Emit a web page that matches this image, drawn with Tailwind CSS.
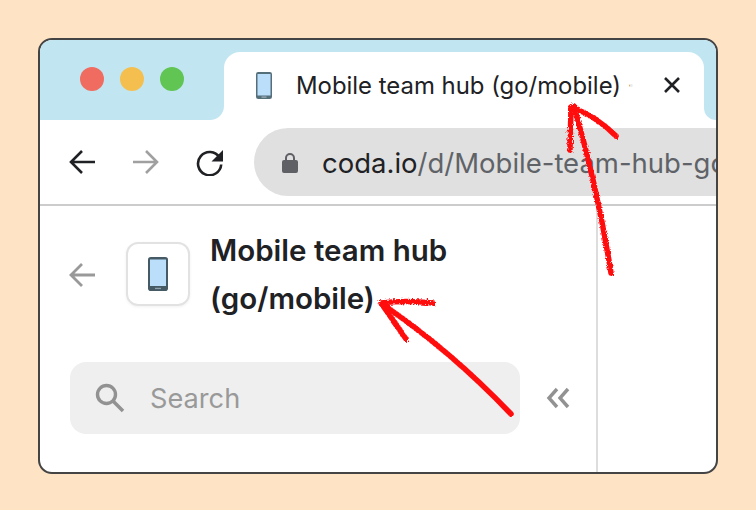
<!doctype html>
<html>
<head>
<meta charset="utf-8">
<script src="https://cdn.jsdelivr.net/npm/@tailwindcss/browser@4"></script>
</head>
<body class="m-0 w-[756px] h-[510px] overflow-hidden bg-[#ffe3c5] font-['Inter',sans-serif] [font-optical-sizing:none] relative">
<div class="pt-[38px] pl-[38px]">
  <div class="w-[680px] h-[436px] border-2 border-[#444444] rounded-[14px] overflow-hidden bg-white flex flex-col">
    <!-- tab strip -->
    <div class="flex h-[80px] shrink-0">
      <div class="w-[184px] bg-[#c1e6f1] rounded-br-[14px] pl-[40px] pt-[27px] flex gap-[16px] items-start">
        <span class="w-[24px] h-[24px] rounded-full bg-[#f16c60]"></span>
        <span class="w-[24px] h-[24px] rounded-full bg-[#f5bf4f]"></span>
        <span class="w-[24px] h-[24px] rounded-full bg-[#61c554]"></span>
      </div>
      <div class="w-[480px] bg-[#c1e6f1] pt-[12px]">
        <div class="h-[68px] bg-white rounded-t-[16px] flex items-center pl-[32px] relative">
          <svg class="w-[16px] h-[27px] shrink-0 -mt-[1px]" viewBox="0 0 16 27"><rect width="16" height="27" rx="2.2" fill="#546e7a"/><rect x="1.5" y="2" width="13" height="21.5" fill="#bbdefb"/><rect x="5.5" y="24.6" width="5" height="1" fill="#b0bec5"/></svg>
          <div class="ml-[24px] w-[347px] overflow-hidden whitespace-nowrap text-[23.9px] leading-[32px] text-[#202124] relative -mt-[1px]">Mobile team hub (go/mobile) · Coda
            <div class="absolute right-0 top-0 bottom-0 w-[13px] bg-gradient-to-r from-white/90 to-white"></div>
          </div>
          <svg class="absolute left-[440px] top-[25px] w-[16px] h-[16px]" viewBox="0 0 16 16"><path d="M1 1 L15 15 M15 1 L1 15" stroke="#202124" stroke-width="2.6" fill="none"/></svg>
        </div>
      </div>
      <div class="flex-1 bg-[#c1e6f1] rounded-bl-[14px]"></div>
    </div>
    <!-- toolbar -->
    <div class="h-[84px] shrink-0 flex border-b-0 pt-[8px] pl-[28px]">
      <div class="flex items-center h-[68px] gap-[36px] shrink-0">
        <svg class="w-[28px] h-[26px]" viewBox="0 0 28 26"><path d="M27 13 H3 M14 2 L3 13 L14 24" stroke="#202124" stroke-width="2.6" fill="none"/></svg>
        <svg class="w-[28px] h-[26px]" viewBox="0 0 28 26"><path d="M1 13 H25 M14 2 L25 13 L14 24" stroke="#a0a0a0" stroke-width="2.6" fill="none"/></svg>
        <svg class="w-[28px] h-[28px]" viewBox="0 0 28 28"><path d="M23.5 9.5 A11.6 11.6 0 1 0 25.2 16.5" stroke="#202124" stroke-width="2.6" fill="none"/><path d="M27 2 V13.5 H15.5 Z" fill="#202124"/></svg>
      </div>
      <div class="ml-[30px] flex-1 h-[68px] bg-[#e0e0e0] rounded-l-[34px] flex items-center pl-[28px] overflow-hidden">
        <svg class="w-[16px] h-[21px] shrink-0" viewBox="0 0 16 21"><path d="M4 9 V6 A4 4 0 0 1 12 6 V9" stroke="#5f6065" stroke-width="2" fill="none"/><rect y="8" width="16" height="13" rx="2" fill="#5f6065"/></svg>
        <div class="ml-[24px] mt-[1px] whitespace-nowrap text-[27.5px] leading-[34px] text-[#5f6368]"><span class="text-[#202124]">coda.io</span>/d/Mobile-team-hub-go-mobile</div>
      </div>
    </div>
    <div class="h-[2px] shrink-0 bg-[#cccccc]"></div>
    <!-- sidebar -->
    <div class="flex-1 flex">
      <div class="w-[558px] border-r-2 border-[#dddddd] pl-[28px]">
        <div class="flex h-[156px]">
          <svg class="w-[28px] h-[26px] mt-[56px] shrink-0" viewBox="0 0 28 26"><path d="M27 13 H3 M14 2 L3 13 L14 24" stroke="#999999" stroke-width="2.8" fill="none"/></svg>
          <div class="ml-[30px] mt-[36px] w-[64px] h-[64px] shrink-0 border-2 border-[#e2e2e2] rounded-[12px] shadow-[0_1px_3px_rgba(0,0,0,0.06)] flex items-center justify-center">
            <svg class="w-[20px] h-[34px]" viewBox="0 0 20 34"><rect width="20" height="34" rx="2.8" fill="#455a64"/><rect x="2" y="2.5" width="16" height="26.5" fill="#bbdefb"/><rect x="7" y="30.8" width="6" height="1.3" fill="#90a4ae"/></svg>
          </div>
          <div class="ml-[20px] mt-[20px] w-[300px] text-[29.5px] leading-[48px] font-semibold text-[#202124]">Mobile team hub<br>(go/mobile)</div>
        </div>
        <div class="flex items-center">
          <div class="w-[450px] h-[72px] ml-[2px] bg-[#efefef] rounded-[16px] flex items-center pl-[25px]">
            <svg class="w-[30px] h-[30px] shrink-0" viewBox="0 0 30 30"><circle cx="11.5" cy="11.5" r="9" stroke="#929292" stroke-width="3.4" fill="none"/><path d="M18 18 L28 28" stroke="#929292" stroke-width="3.6" fill="none"/></svg>
            <span class="ml-[25px] mt-[1px] text-[27.2px] leading-[34px] text-[#999999]">Search</span>
          </div>
          <svg class="ml-[26px] w-[24px] h-[22px] shrink-0" viewBox="0 0 24 22"><path d="M11 2 L3 11 L11 20 M22 2 L14 11 L22 20" stroke="#929292" stroke-width="3.4" fill="none"/></svg>
        </div>
      </div>
    </div>
  </div>
</div>
<!-- hand-drawn annotation arrows -->
<svg class="absolute left-0 top-0 w-[756px] h-[510px] pointer-events-none" viewBox="0 0 756 510">
  <defs><filter id="rough" x="-10%" y="-10%" width="120%" height="120%"><feTurbulence type="fractalNoise" baseFrequency="0.6" numOctaves="3" seed="4"/><feDisplacementMap in="SourceGraphic" scale="5"/><feGaussianBlur stdDeviation="0.5"/></filter></defs>
  <g filter="url(#rough)" fill="none" stroke="#ff0a0f" stroke-width="5.5" stroke-linecap="round" stroke-linejoin="round">
    <path d="M611 273 Q598 190 574 106"/>
    <path d="M570 150 L571 107 Q596 116 616 136"/>
    <path d="M511 414 Q450 350 382 304"/>
    <path d="M433 303 Q405 300 381 303 L406 339"/>
  </g>
</svg>
</body>
</html>
